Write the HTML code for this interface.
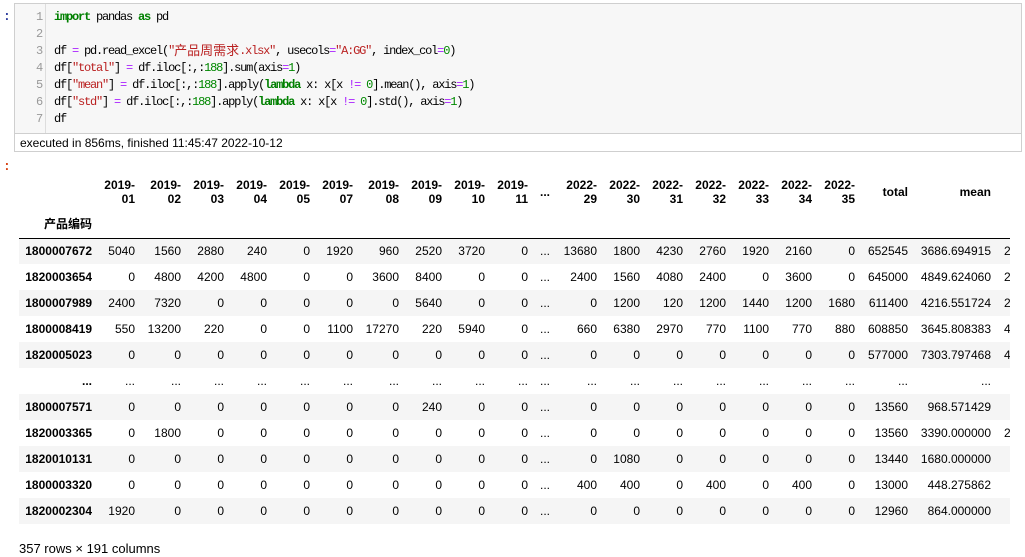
<!DOCTYPE html>
<html><head><meta charset="utf-8">
<style>
*{margin:0;padding:0;box-sizing:border-box}
body{width:1025px;height:557px;background:#fff;position:relative;overflow:hidden;font-family:"Liberation Sans","Noto Sans CJK SC",sans-serif;color:#000}
.p1{position:absolute;left:3px;top:9px;color:#303f9f;font:bold 13px "Liberation Mono",monospace}
.p2{position:absolute;left:3px;top:159px;color:#d84315;font:bold 13px "Liberation Mono",monospace}
.cell{position:absolute;left:14px;top:3px;width:1008px;height:149px;border:1px solid #cfcfcf;background:#f7f7f7}
.gut{position:absolute;left:0;top:0;width:31px;height:129px;border-right:1px solid #ddd;background:#f7f7f7}
.code{position:absolute;left:31px;top:0;right:0;height:129px;background:#f7f7f7}
.ln{position:absolute;left:0;width:27px;height:17px;line-height:17px;text-align:right;color:#999;font-family:"Liberation Mono",monospace;font-size:12px;letter-spacing:-1.2px}
.cl{position:absolute;left:8px;height:17px;line-height:17px;white-space:pre;font-family:"Liberation Mono","Noto Sans CJK SC",monospace;font-size:12px;letter-spacing:-1.2px;color:#000}
.cj{font-size:13px;letter-spacing:0;line-height:17px;vertical-align:top}
.k{color:#008000;font-weight:bold}.o{color:#aa22ff}.s{color:#ba2121}.n{color:#080}
.ex{position:absolute;left:0;top:129px;right:0;height:18px;border-top:1px solid #cfcfcf;background:#fff;font-size:12px;padding:2px 0 0 5px;color:#000}
.wrap{position:absolute;left:19px;top:170px;width:991px;height:355px;overflow:hidden}
table{border-collapse:collapse;table-layout:fixed;width:1037px;font-size:12px}
td,th{text-align:right;padding:0 5px 0 0;white-space:nowrap;overflow:hidden;height:26px;line-height:14px}
th{font-weight:bold}
thead tr.h1 th{height:41px;vertical-align:middle;padding-top:3px}
thead tr.h2 th{height:27px;border-bottom:1px solid #000}
tbody tr:nth-child(odd){background:#f5f5f5}
.foot{position:absolute;left:19px;top:541px;font-size:13px}
.sd{text-align:left!important;padding-left:8px!important}
</style></head><body>
<div class="p1">:</div>
<div class="cell">
<div class="gut">
<div class="ln" style="top:5px">1</div><div class="ln" style="top:22px">2</div><div class="ln" style="top:39px">3</div><div class="ln" style="top:56px">4</div><div class="ln" style="top:73px">5</div><div class="ln" style="top:90px">6</div><div class="ln" style="top:107px">7</div>
</div>
<div class="code">
<div class="cl" style="top:5px"><span class="k">import</span> pandas <span class="k">as</span> pd</div>
<div class="cl" style="top:39px">df <span class="o">=</span> pd.read_excel(<span class="s">″<span class="cj">产品周需求</span>.xlsx″</span>, usecols<span class="o">=</span><span class="s">″A:GG″</span>, index_col<span class="o">=</span><span class="n">0</span>)</div>
<div class="cl" style="top:56px">df[<span class="s">″total″</span>] <span class="o">=</span> df.iloc[:,:<span class="n">188</span>].sum(axis<span class="o">=</span><span class="n">1</span>)</div>
<div class="cl" style="top:73px">df[<span class="s">″mean″</span>] <span class="o">=</span> df.iloc[:,:<span class="n">188</span>].apply(<span class="k">lambda</span> x: x[x <span class="o">!=</span> <span class="n">0</span>].mean(), axis<span class="o">=</span><span class="n">1</span>)</div>
<div class="cl" style="top:90px">df[<span class="s">″std″</span>] <span class="o">=</span> df.iloc[:,:<span class="n">188</span>].apply(<span class="k">lambda</span> x: x[x <span class="o">!=</span> <span class="n">0</span>].std(), axis<span class="o">=</span><span class="n">1</span>)</div>
<div class="cl" style="top:107px">df</div>
</div>
<div class="ex">executed in 856ms, finished 11:45:47 2022-10-12</div>
</div>
<div class="p2">:</div>
<div class="wrap">
<table>
<colgroup><col style="width:78px"><col style="width:43px"><col style="width:46px"><col style="width:43px"><col style="width:43px"><col style="width:43px"><col style="width:43px"><col style="width:46px"><col style="width:43px"><col style="width:43px"><col style="width:43px"><col style="width:22px"><col style="width:47px"><col style="width:43px"><col style="width:43px"><col style="width:43px"><col style="width:43px"><col style="width:43px"><col style="width:43px"><col style="width:53px"><col style="width:83px"><col style="width:60px"></colgroup>
<thead>
<tr class="h1"><th></th><th>2019-<br>01</th><th>2019-<br>02</th><th>2019-<br>03</th><th>2019-<br>04</th><th>2019-<br>05</th><th>2019-<br>07</th><th>2019-<br>08</th><th>2019-<br>09</th><th>2019-<br>10</th><th>2019-<br>11</th><th>...</th><th>2022-<br>29</th><th>2022-<br>30</th><th>2022-<br>31</th><th>2022-<br>32</th><th>2022-<br>33</th><th>2022-<br>34</th><th>2022-<br>35</th><th>total</th><th>mean</th><th></th></tr>
<tr class="h2"><th>产品编码</th><th></th><th></th><th></th><th></th><th></th><th></th><th></th><th></th><th></th><th></th><th></th><th></th><th></th><th></th><th></th><th></th><th></th><th></th><th></th><th></th><th></th></tr>
</thead>
<tbody>
<tr><th>1800007672</th><td>5040</td><td>1560</td><td>2880</td><td>240</td><td>0</td><td>1920</td><td>960</td><td>2520</td><td>3720</td><td>0</td><td>...</td><td>13680</td><td>1800</td><td>4230</td><td>2760</td><td>1920</td><td>2160</td><td>0</td><td>652545</td><td>3686.694915</td><td class="sd">2</td></tr>
<tr><th>1820003654</th><td>0</td><td>4800</td><td>4200</td><td>4800</td><td>0</td><td>0</td><td>3600</td><td>8400</td><td>0</td><td>0</td><td>...</td><td>2400</td><td>1560</td><td>4080</td><td>2400</td><td>0</td><td>3600</td><td>0</td><td>645000</td><td>4849.624060</td><td class="sd">2</td></tr>
<tr><th>1800007989</th><td>2400</td><td>7320</td><td>0</td><td>0</td><td>0</td><td>0</td><td>0</td><td>5640</td><td>0</td><td>0</td><td>...</td><td>0</td><td>1200</td><td>120</td><td>1200</td><td>1440</td><td>1200</td><td>1680</td><td>611400</td><td>4216.551724</td><td class="sd">2</td></tr>
<tr><th>1800008419</th><td>550</td><td>13200</td><td>220</td><td>0</td><td>0</td><td>1100</td><td>17270</td><td>220</td><td>5940</td><td>0</td><td>...</td><td>660</td><td>6380</td><td>2970</td><td>770</td><td>1100</td><td>770</td><td>880</td><td>608850</td><td>3645.808383</td><td class="sd">4</td></tr>
<tr><th>1820005023</th><td>0</td><td>0</td><td>0</td><td>0</td><td>0</td><td>0</td><td>0</td><td>0</td><td>0</td><td>0</td><td>...</td><td>0</td><td>0</td><td>0</td><td>0</td><td>0</td><td>0</td><td>0</td><td>577000</td><td>7303.797468</td><td class="sd">4</td></tr>
<tr><th>...</th><td>...</td><td>...</td><td>...</td><td>...</td><td>...</td><td>...</td><td>...</td><td>...</td><td>...</td><td>...</td><td>...</td><td>...</td><td>...</td><td>...</td><td>...</td><td>...</td><td>...</td><td>...</td><td>...</td><td>...</td><td></td></tr>
<tr><th>1800007571</th><td>0</td><td>0</td><td>0</td><td>0</td><td>0</td><td>0</td><td>0</td><td>240</td><td>0</td><td>0</td><td>...</td><td>0</td><td>0</td><td>0</td><td>0</td><td>0</td><td>0</td><td>0</td><td>13560</td><td>968.571429</td><td></td></tr>
<tr><th>1820003365</th><td>0</td><td>1800</td><td>0</td><td>0</td><td>0</td><td>0</td><td>0</td><td>0</td><td>0</td><td>0</td><td>...</td><td>0</td><td>0</td><td>0</td><td>0</td><td>0</td><td>0</td><td>0</td><td>13560</td><td>3390.000000</td><td class="sd">2</td></tr>
<tr><th>1820010131</th><td>0</td><td>0</td><td>0</td><td>0</td><td>0</td><td>0</td><td>0</td><td>0</td><td>0</td><td>0</td><td>...</td><td>0</td><td>1080</td><td>0</td><td>0</td><td>0</td><td>0</td><td>0</td><td>13440</td><td>1680.000000</td><td></td></tr>
<tr><th>1800003320</th><td>0</td><td>0</td><td>0</td><td>0</td><td>0</td><td>0</td><td>0</td><td>0</td><td>0</td><td>0</td><td>...</td><td>400</td><td>400</td><td>0</td><td>400</td><td>0</td><td>400</td><td>0</td><td>13000</td><td>448.275862</td><td></td></tr>
<tr><th>1820002304</th><td>1920</td><td>0</td><td>0</td><td>0</td><td>0</td><td>0</td><td>0</td><td>0</td><td>0</td><td>0</td><td>...</td><td>0</td><td>0</td><td>0</td><td>0</td><td>0</td><td>0</td><td>0</td><td>12960</td><td>864.000000</td><td></td></tr>
</tbody>
</table>
</div>
<div class="foot">357 rows × 191 columns</div>
</body></html>
